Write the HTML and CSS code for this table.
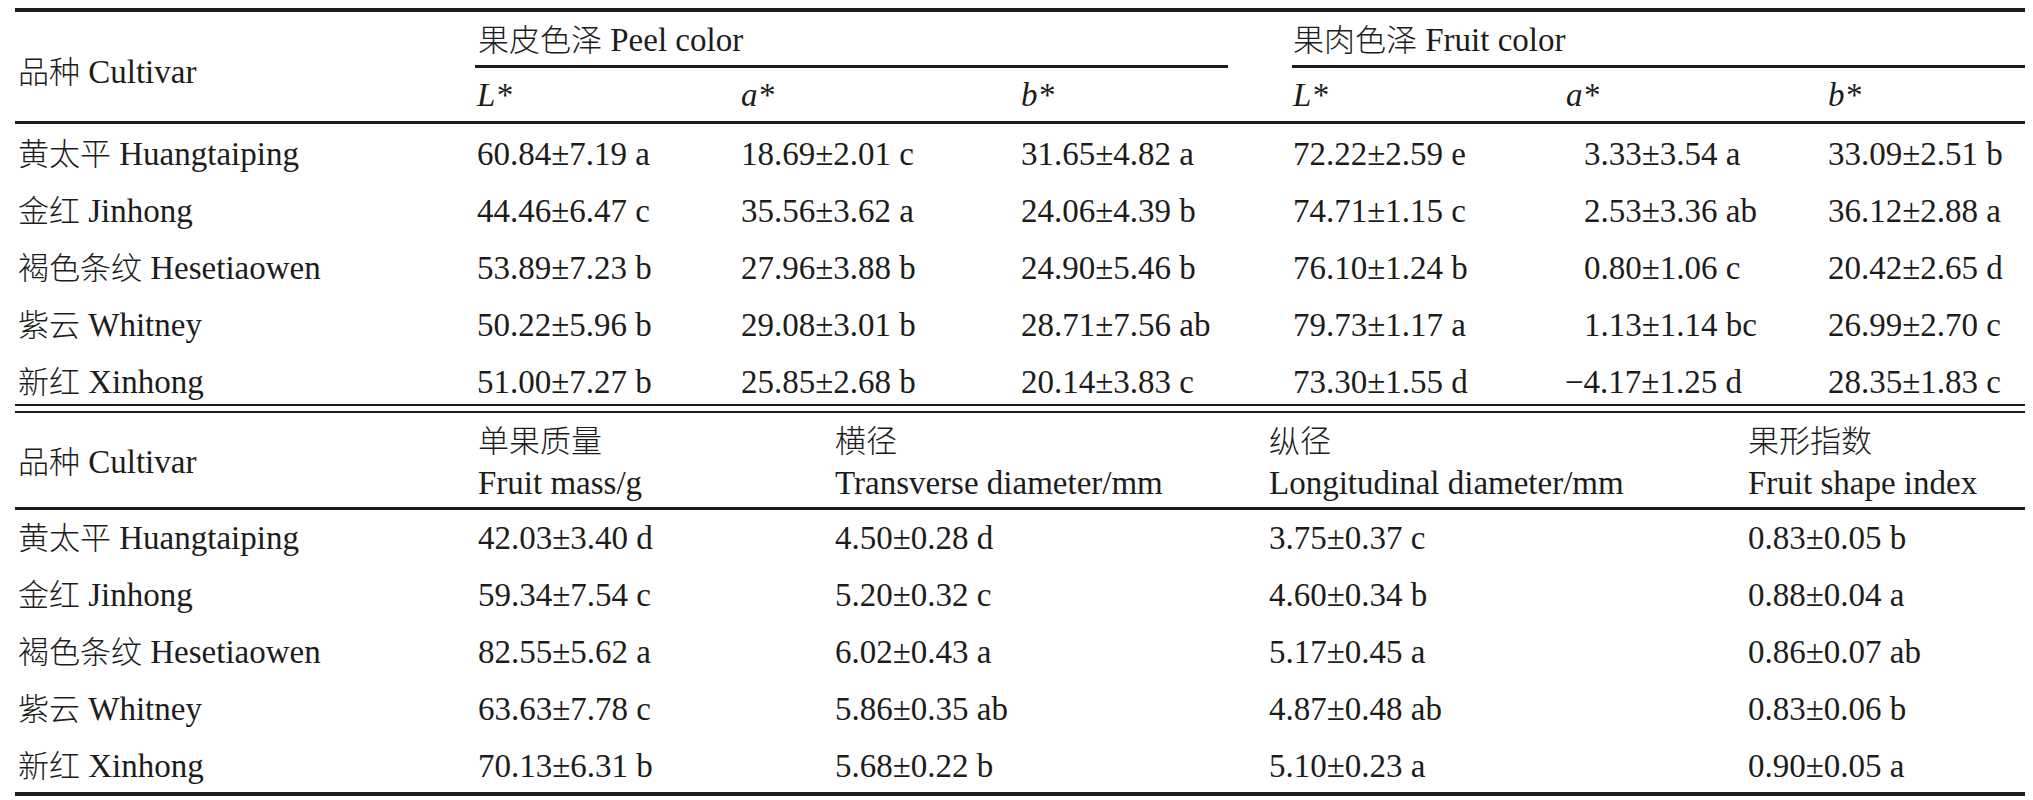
FILE: index.html
```html
<!DOCTYPE html>
<html lang="zh">
<head>
<meta charset="utf-8">
<title>果实品质</title>
<link rel="stylesheet" href="styles.css">
</head>
<body>
<div class="sheet">
  <div class="t1">
    <div class="head1 cols7">
      <div class="cell cv1"><span class="zh">品种</span> Cultivar</div>
      <div class="cell grp peel"><span class="zh">果皮色泽</span> Peel color</div>
      <div class="cell grp fruit"><span class="zh">果肉色泽</span> Fruit color</div>
      <div class="cell sub"><i>L*</i></div>
      <div class="cell sub"><i>a*</i></div>
      <div class="cell sub"><i>b*</i></div>
      <div class="cell sub"><i>L*</i></div>
      <div class="cell sub"><i>a*</i></div>
      <div class="cell sub"><i>b*</i></div>
    </div>
    <div class="body1">
      <div class="row cols7">
        <div class="cell"><span class="zh">黄太平</span> Huangtaiping</div><div class="cell">60.84±7.19 a</div><div class="cell">18.69±2.01 c</div><div class="cell">31.65±4.82 a</div><div class="cell">72.22±2.59 e</div><div class="cell fa">3.33±3.54 a</div><div class="cell">33.09±2.51 b</div>
      </div>
      <div class="row cols7">
        <div class="cell"><span class="zh">金红</span> Jinhong</div><div class="cell">44.46±6.47 c</div><div class="cell">35.56±3.62 a</div><div class="cell">24.06±4.39 b</div><div class="cell">74.71±1.15 c</div><div class="cell fa">2.53±3.36 ab</div><div class="cell">36.12±2.88 a</div>
      </div>
      <div class="row cols7">
        <div class="cell"><span class="zh">褐色条纹</span> Hesetiaowen</div><div class="cell">53.89±7.23 b</div><div class="cell">27.96±3.88 b</div><div class="cell">24.90±5.46 b</div><div class="cell">76.10±1.24 b</div><div class="cell fa">0.80±1.06 c</div><div class="cell">20.42±2.65 d</div>
      </div>
      <div class="row cols7">
        <div class="cell"><span class="zh">紫云</span> Whitney</div><div class="cell">50.22±5.96 b</div><div class="cell">29.08±3.01 b</div><div class="cell">28.71±7.56 ab</div><div class="cell">79.73±1.17 a</div><div class="cell fa">1.13±1.14 bc</div><div class="cell">26.99±2.70 c</div>
      </div>
      <div class="row cols7">
        <div class="cell"><span class="zh">新红</span> Xinhong</div><div class="cell">51.00±7.27 b</div><div class="cell">25.85±2.68 b</div><div class="cell">20.14±3.83 c</div><div class="cell">73.30±1.55 d</div><div class="cell fa neg">−4.17±1.25 d</div><div class="cell">28.35±1.83 c</div>
      </div>
    </div>
  </div>

  <div class="t2">
    <div class="head2 cols5">
      <div class="cell cv2"><span class="zh">品种</span> Cultivar</div>
      <div class="cell h2"><span class="zh">单果质量</span><br>Fruit mass/g</div>
      <div class="cell h2"><span class="zh">横径</span><br>Transverse diameter/mm</div>
      <div class="cell h2"><span class="zh">纵径</span><br>Longitudinal diameter/mm</div>
      <div class="cell h2"><span class="zh">果形指数</span><br>Fruit shape index</div>
    </div>
    <div class="body2">
      <div class="row cols5">
        <div class="cell"><span class="zh">黄太平</span> Huangtaiping</div><div class="cell">42.03±3.40 d</div><div class="cell">4.50±0.28 d</div><div class="cell">3.75±0.37 c</div><div class="cell">0.83±0.05 b</div>
      </div>
      <div class="row cols5">
        <div class="cell"><span class="zh">金红</span> Jinhong</div><div class="cell">59.34±7.54 c</div><div class="cell">5.20±0.32 c</div><div class="cell">4.60±0.34 b</div><div class="cell">0.88±0.04 a</div>
      </div>
      <div class="row cols5">
        <div class="cell"><span class="zh">褐色条纹</span> Hesetiaowen</div><div class="cell">82.55±5.62 a</div><div class="cell">6.02±0.43 a</div><div class="cell">5.17±0.45 a</div><div class="cell">0.86±0.07 ab</div>
      </div>
      <div class="row cols5">
        <div class="cell"><span class="zh">紫云</span> Whitney</div><div class="cell">63.63±7.78 c</div><div class="cell">5.86±0.35 ab</div><div class="cell">4.87±0.48 ab</div><div class="cell">0.83±0.06 b</div>
      </div>
      <div class="row cols5">
        <div class="cell"><span class="zh">新红</span> Xinhong</div><div class="cell">70.13±6.31 b</div><div class="cell">5.68±0.22 b</div><div class="cell">5.10±0.23 a</div><div class="cell">0.90±0.05 a</div>
      </div>
    </div>
  </div>
</div>
</body>
</html>
```

FILE: styles.css
```css
html, body {
  background: #ffffff;
}

body {
  margin: 0;
  color: #1c1c1c;
  font-family: "Liberation Serif", "Times New Roman", serif;
  font-size: 33px;
  font-weight: 400;
}

.zh {
  font-family: "Noto Sans CJK SC", sans-serif;
  font-size: 31px;
  font-weight: 300;
  line-height: 0;
}

.sheet {
  margin: 8px 0 0 15px;
  width: 2010px;
}

.cols7 {
  display: grid;
  grid-template-columns: 459px 264px 280px 272px 273px 262px 200px;
}

.cols5 {
  display: grid;
  grid-template-columns: 460px 357px 434px 479px 280px;
}

.cell {
  padding-left: 3px;
  white-space: nowrap;
}

/* ---------- table 1 ---------- */
.t1 {
  border-top: 4px solid #1c1c1c;
}

.head1 {
  border-bottom: 3px solid #1c1c1c;
}

.cv1 {
  grid-row: 1 / 3;
  grid-column: 1;
  padding-top: 11px;
  line-height: 98px;
}

.grp {
  grid-row: 1;
  padding-top: 3px;
  line-height: 50px;
  border-bottom: 3px solid #1c1c1c;
}

.peel {
  grid-column: 2 / 5;
  margin-left: 1px;
  margin-right: 62px;
}

.fruit {
  grid-column: 5 / 8;
  margin-left: 2px;
  padding-left: 1px;
}

.sub {
  grid-row: 2;
  padding-top: 2px;
  line-height: 51px;
}

.sub i {
  font-style: italic;
}

.body1 {
  height: 278px;
  padding-top: 2px;
  border-bottom: 2px solid #1c1c1c;
}

.row {
  height: 57px;
  line-height: 57px;
}

.fa {
  padding-left: 21px;
}

.neg {
  text-indent: -19px;
}

/* ---------- table 2 ---------- */
.t2 {
  margin-top: 5px;
  border-top: 2px solid #1c1c1c;
}

.head2 {
  border-bottom: 3px solid #1c1c1c;
}

.cv2 {
  padding-top: 7px;
  padding-bottom: 3px;
  line-height: 84px;
}

.h2 {
  padding-top: 7px;
  padding-bottom: 3px;
  line-height: 42px;
}

.body2 {
  height: 282px;
  border-bottom: 4px solid #1c1c1c;
}
```
